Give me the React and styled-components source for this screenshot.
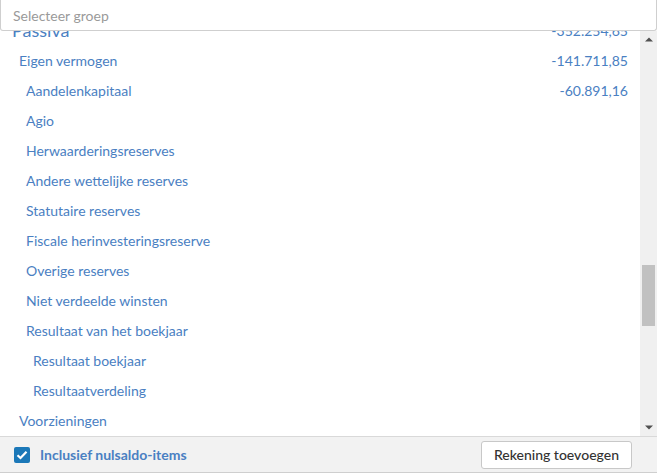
import React, { useLayoutEffect, useRef } from "react";
import styled, { createGlobalStyle } from "styled-components";

const Global = createGlobalStyle`
  html, body { margin: 0; padding: 0; background: #fff; }
  body { font-family: Lato, "Open Sans", Arial, sans-serif; }
  * { box-sizing: border-box; }
`;

const Panel = styled.div`
  width: 657px;
  height: 473px;
  display: flex;
  flex-direction: column;
  background: #fff;
`;

const SearchBox = styled.input`
  height: 31px;
  flex: none;
  width: 657px;
  margin: 0;
  border: 1px solid #cfcfcf;
  border-top: none;
  border-radius: 0 0 3px 3px;
  padding: 0 12px;
  font-family: Lato, sans-serif;
  font-size: 14px;
  color: #333;
  outline: none;
  background: #fff;
  &::placeholder { color: #9a9a9a; }
`;

const ListArea = styled.div`
  flex: 1;
  min-height: 0;
  display: flex;
`;

const List = styled.div`
  flex: 1;
  min-width: 0;
  overflow: hidden;
`;

const ScrollBar = styled.div`
  width: 17px;
  flex: none;
  display: flex;
  flex-direction: column;
  background: #f0f0f0;
`;

const ArrowButton = styled.div`
  height: 17px;
  flex: none;
  display: flex;
  align-items: center;
  justify-content: center;
`;

const Track = styled.div`
  flex: 1;
  padding: 0 2px;
  display: flex;
  flex-direction: column;
`;

const Thumb = styled.div`
  flex: none;
  background: #c1c1c1;
`;

const Row = styled.div`
  height: 30px;
  display: flex;
  align-items: center;
  justify-content: space-between;
  padding-left: ${(p) => 12 + p.$level * 7}px;
  padding-right: 12px;
  color: #4a80c2;
  font-size: ${(p) => (p.$level === 0 ? 18 : 14)}px;
  white-space: nowrap;
`;

const Amount = styled.span`
  font-size: 14px;
  color: #4a80c2;
`;

const Footer = styled.div`
  height: 37px;
  flex: none;
  display: flex;
  align-items: center;
  justify-content: space-between;
  background: #f2f2f2;
  border-top: 1px solid #d9d9d9;
  border-bottom: 1px solid #cfcfcf;
  padding: 0 25px 0 14px;
`;

const CheckLabel = styled.label`
  display: flex;
  align-items: center;
  gap: 10px;
  color: #4a80c2;
  font-weight: 700;
  font-size: 14px;
`;

const Box = styled.span`
  width: 16px;
  height: 16px;
  border-radius: 2px;
  background: #1b78b8;
  display: flex;
  align-items: center;
  justify-content: center;
`;

const Button = styled.button`
  height: 28px;
  padding: 0 12px;
  background: #fff;
  border: 1px solid #c8c8c8;
  border-radius: 3px;
  font-family: Lato, sans-serif;
  font-size: 14px;
  font-weight: 500;
  color: #333;
`;

const rows = [
  [0, "Activa", "352.254,65"],
  [1, "Vaste activa", "210.542,80"],
  [2, "Oprichtingskosten"],
  [2, "Immateriële vaste activa"],
  [2, "Materiële vaste activa", "198.042,80"],
  [3, "Terreinen en gebouwen", "150.000,00"],
  [3, "Installaties, machines en uitrusting", "32.540,12"],
  [3, "Meubilair en rollend materieel", "15.502,68"],
  [3, "Leasing en soortgelijke rechten"],
  [3, "Overige materiële vaste activa"],
  [3, "Activa in aanbouw en vooruitbetalingen"],
  [2, "Financiële vaste activa", "12.500,00"],
  [3, "Verbonden ondernemingen"],
  [4, "Deelnemingen"],
  [4, "Vorderingen"],
  [3, "Ondernemingen waarmee een deelnemingsverhouding bestaat"],
  [4, "Deelnemingen"],
  [4, "Vorderingen"],
  [3, "Andere financiële vaste activa", "12.500,00"],
  [4, "Aandelen", "12.500,00"],
  [4, "Vorderingen en borgtochten in contanten"],
  [1, "Vlottende activa", "141.711,85"],
  [2, "Vorderingen op meer dan één jaar"],
  [3, "Handelsvorderingen"],
  [3, "Overige vorderingen"],
  [2, "Voorraden en bestellingen in uitvoering"],
  [3, "Voorraden"],
  [4, "Grond- en hulpstoffen"],
  [4, "Goederen in bewerking"],
  [4, "Gereed product"],
  [4, "Handelsgoederen"],
  [4, "Onroerende goederen bestemd voor verkoop"],
  [4, "Vooruitbetalingen"],
  [3, "Bestellingen in uitvoering"],
  [2, "Vorderingen op ten hoogste één jaar", "48.210,40"],
  [3, "Handelsvorderingen", "45.110,40"],
  [3, "Overige vorderingen", "3.100,00"],
  [2, "Geldbeleggingen"],
  [3, "Eigen aandelen"],
  [3, "Overige beleggingen"],
  [2, "Liquide middelen", "93.501,45"],
  [3, "Banken", "92.850,10"],
  [3, "Kas", "651,35"],
  [3, "Kruisposten"],
  [2, "Overlopende rekeningen"],
  [3, "Over te dragen kosten"],
  [3, "Verworven opbrengsten"],
  [0, "Passiva", "-352.254,65"],
  [1, "Eigen vermogen", "-141.711,85"],
  [2, "Aandelenkapitaal", "-60.891,16"],
  [2, "Agio"],
  [2, "Herwaarderingsreserves"],
  [2, "Andere wettelijke reserves"],
  [2, "Statutaire reserves"],
  [2, "Fiscale herinvesteringsreserve"],
  [2, "Overige reserves"],
  [2, "Niet verdeelde winsten"],
  [2, "Resultaat van het boekjaar"],
  [3, "Resultaat boekjaar"],
  [3, "Resultaatverdeling"],
  [1, "Voorzieningen"],
  [2, "Voorzieningen voor risico's en kosten"],
  [3, "Pensioenen en soortgelijke verplichtingen"],
  [3, "Belastingen"],
  [3, "Grote herstellings- en onderhoudswerken"],
  [3, "Milieuverplichtingen"],
  [3, "Overige risico's en kosten"],
  [2, "Uitgestelde belastingen"],
  [1, "Schulden", "-210.542,80"],
  [2, "Schulden op meer dan één jaar", "-120.000,00"],
  [3, "Financiële schulden", "-120.000,00"],
  [3, "Handelsschulden"],
  [3, "Ontvangen vooruitbetalingen op bestellingen"],
  [3, "Overige schulden"],
  [2, "Schulden op ten hoogste één jaar", "-90.542,80"],
  [3, "Schulden op meer dan één jaar die binnen het jaar vervallen"],
  [3, "Financiële schulden"],
  [3, "Handelsschulden", "-62.310,55"],
  [3, "Ontvangen vooruitbetalingen op bestellingen"],
  [3, "Schulden met betrekking tot belastingen en sociale lasten", "-28.232,25"],
  [3, "Overige schulden"],
  [2, "Overlopende rekeningen"],
];

const ROW_H = 30;
const VIEW_H = 405;
const ARROW_H = 17;
const TRACK_H = VIEW_H - 2 * ARROW_H;

export default function App() {
  const listRef = useRef(null);
  const passivaIndex = rows.findIndex((r) => r[1] === "Passiva");
  const scrollTop = passivaIndex * ROW_H + 16;
  const contentH = rows.length * ROW_H;
  const thumbH = 61;
  const thumbTop = 217;

  useLayoutEffect(() => {
    if (listRef.current) listRef.current.scrollTop = scrollTop;
  }, [scrollTop]);

  return (
    <Panel>
      <Global />
      <SearchBox placeholder="Selecteer groep" />
      <ListArea>
        <List ref={listRef}>
          {rows.map(([level, name, amount], i) => (
            <Row key={i} $level={level}>
              <span>{name}</span>
              {amount && <Amount>{amount}</Amount>}
            </Row>
          ))}
        </List>
        <ScrollBar>
          <ArrowButton>
            <svg width="8" height="5" viewBox="0 0 8 5">
              <path d="M0 4.5 L4 0.5 L8 4.5 Z" fill="#505050" />
            </svg>
          </ArrowButton>
          <Track>
            <div style={{ height: thumbTop }} />
            <Thumb style={{ height: thumbH }} />
          </Track>
          <ArrowButton>
            <svg width="8" height="5" viewBox="0 0 8 5">
              <path d="M0 0.5 L4 4.5 L8 0.5 Z" fill="#505050" />
            </svg>
          </ArrowButton>
        </ScrollBar>
      </ListArea>
      <Footer>
        <CheckLabel>
          <Box>
            <svg width="12" height="10" viewBox="0 0 12 10">
              <path d="M1.5 5.2 L4.5 8 L10.5 1.8" fill="none" stroke="#fff" strokeWidth="2.2" />
            </svg>
          </Box>
          Inclusief nulsaldo-items
        </CheckLabel>
        <Button>Rekening toevoegen</Button>
      </Footer>
    </Panel>
  );
}
